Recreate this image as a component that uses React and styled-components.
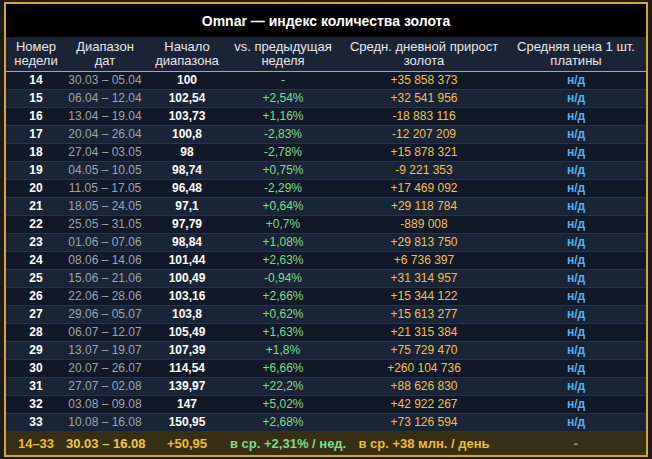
import React from "react";
import styled, { createGlobalStyle } from "styled-components";

const Global = createGlobalStyle`
  html, body { margin: 0; padding: 0; background: #1c1c1c; }
  body { font-family: "Liberation Sans", Arial, sans-serif; }
`;

const Frame = styled.div`
  box-sizing: border-box;
  width: 644px;
  margin: 2px 0 0 4px;
  border: 2px solid #d4a62c;
  background: #000;
`;

const Title = styled.div`
  height: 33px;
  display: flex;
  align-items: center;
  justify-content: center;
  background: #000;
  color: #ffffff;
  font-size: 14px;
  font-weight: 700;
`;

const Table = styled.table`
  width: 640px;
  border-collapse: collapse;
  table-layout: fixed;
`;

const HeadCell = styled.th`
  height: 34px;
  padding: 0 ${(p) => p.$pr || 0}px 0 0;
  background: #1b2435;
  color: #e6e8ec;
  font-size: 13px;
  font-weight: 400;
  line-height: 14px;
  text-align: center;
  vertical-align: middle;
  border-bottom: 1px solid #d4a62c;
`;

const Row = styled.tr`
  background: ${(p) => (p.$odd ? "#1a2437" : "#111928")};
`;

const colors = {
  week: "#ffffff",
  date: "#9ba4b1",
  start: "#ffffff",
  pct: "#7fdc8c",
  gold: "#f0c04a",
  na: "#58aef0",
};

const Cell = styled.td`
  height: 17px;
  padding: 0 ${(p) => p.$pr || 0}px 0 0;
  border-bottom: 1px solid #28324a;
  font-size: 12px;
  line-height: 17px;
  text-align: center;
  white-space: nowrap;
  color: ${(p) => colors[p.$kind]};
  font-weight: ${(p) => (p.$bold ? 700 : 400)};
`;

const FootRow = styled.tr`
  background: #372e16;
`;

const FootCell = styled.td`
  height: 23px;
  padding: 0 ${(p) => p.$pr || 0}px 0 0;
  font-size: 13px;
  font-weight: 700;
  text-align: center;
  white-space: nowrap;
  color: ${(p) => p.$color};
`;

const data = [
  ["14", "30.03 – 05.04", "100", "-", "+35 858 373"],
  ["15", "06.04 – 12.04", "102,54", "+2,54%", "+32 541 956"],
  ["16", "13.04 – 19.04", "103,73", "+1,16%", "-18 883 116"],
  ["17", "20.04 – 26.04", "100,8", "-2,83%", "-12 207 209"],
  ["18", "27.04 – 03.05", "98", "-2,78%", "+15 878 321"],
  ["19", "04.05 – 10.05", "98,74", "+0,75%", "-9 221 353"],
  ["20", "11.05 – 17.05", "96,48", "-2,29%", "+17 469 092"],
  ["21", "18.05 – 24.05", "97,1", "+0,64%", "+29 118 784"],
  ["22", "25.05 – 31.05", "97,79", "+0,7%", "-889 008"],
  ["23", "01.06 – 07.06", "98,84", "+1,08%", "+29 813 750"],
  ["24", "08.06 – 14.06", "101,44", "+2,63%", "+6 736 397"],
  ["25", "15.06 – 21.06", "100,49", "-0,94%", "+31 314 957"],
  ["26", "22.06 – 28.06", "103,16", "+2,66%", "+15 344 122"],
  ["27", "29.06 – 05.07", "103,8", "+0,62%", "+15 613 277"],
  ["28", "06.07 – 12.07", "105,49", "+1,63%", "+21 315 384"],
  ["29", "13.07 – 19.07", "107,39", "+1,8%", "+75 729 470"],
  ["30", "20.07 – 26.07", "114,54", "+6,66%", "+260 104 736"],
  ["31", "27.07 – 02.08", "139,97", "+22,2%", "+88 626 830"],
  ["32", "03.08 – 09.08", "147", "+5,02%", "+42 922 267"],
  ["33", "10.08 – 16.08", "150,95", "+2,68%", "+73 126 594"],
];

const widths = [60, 78, 86, 106, 176, 134];

export default function App() {
  return (
    <>
      <Global />
      <Frame>
        <Title>Omnar — индекс количества золота</Title>
        <Table>
          <colgroup>
            {widths.map((w, i) => (
              <col key={i} style={{ width: w }} />
            ))}
          </colgroup>
          <thead>
            <tr>
              <HeadCell>Номер<br />недели</HeadCell>
              <HeadCell>Диапазон<br />дат</HeadCell>
              <HeadCell>Начало<br />диапазона</HeadCell>
              <HeadCell>vs. предыдущая<br />неделя</HeadCell>
              <HeadCell>Средн. дневной прирост<br />золота</HeadCell>
              <HeadCell $pr={6}>Средняя цена 1 шт.<br />платины</HeadCell>
            </tr>
          </thead>
          <tbody>
            {data.map((r, i) => (
              <Row key={r[0]} $odd={i % 2 === 1}>
                <Cell $kind="week" $bold>{r[0]}</Cell>
                <Cell $kind="date">{r[1]}</Cell>
                <Cell $kind="start" $bold>{r[2]}</Cell>
                <Cell $kind="pct">{r[3]}</Cell>
                <Cell $kind="gold">{r[4]}</Cell>
                <Cell $kind="na" $bold $pr={6}>н/д</Cell>
              </Row>
            ))}
            <FootRow>
              <FootCell $color="#f0bc2c">14–33</FootCell>
              <FootCell $color="#f0c83a">30.03 – 16.08</FootCell>
              <FootCell $color="#f0bc2c">+50,95</FootCell>
              <FootCell $color="#7fdc8c">в ср. +2,31% / нед.</FootCell>
              <FootCell $color="#f0bc2c">в ср. +38 млн. / день</FootCell>
              <FootCell $color="#a0a0a0" $pr={6}>-</FootCell>
            </FootRow>
          </tbody>
        </Table>
      </Frame>
    </>
  );
}
